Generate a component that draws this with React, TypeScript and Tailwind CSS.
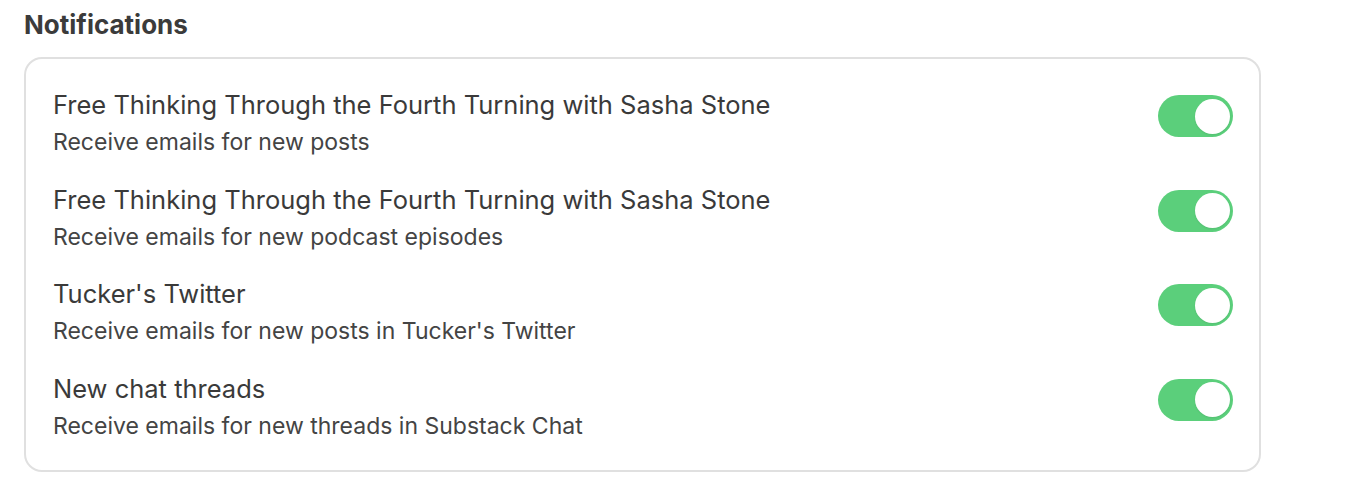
import { useState } from "react";

type Item = { title: string; subtitle: string };

const items: Item[] = [
  { title: "Free Thinking Through the Fourth Turning with Sasha Stone", subtitle: "Receive emails for new posts" },
  { title: "Free Thinking Through the Fourth Turning with Sasha Stone", subtitle: "Receive emails for new podcast episodes" },
  { title: "Tucker's Twitter", subtitle: "Receive emails for new posts in Tucker's Twitter" },
  { title: "New chat threads", subtitle: "Receive emails for new threads in Substack Chat" },
];

function Toggle({ on, onChange }: { on: boolean; onChange: () => void }) {
  return (
    <button
      type="button"
      onClick={onChange}
      className={`mt-[26px] flex h-[42px] w-[75px] shrink-0 items-center rounded-full px-[3.5px] ${
        on ? "justify-end bg-[#5bcf7b]" : "justify-start bg-[#e5e5e5]"
      }`}
    >
      <span className="size-[35px] rounded-full bg-white shadow-[0_1px_2px_rgba(0,0,0,0.08)]" />
    </button>
  );
}

export default function App() {
  const [state, setState] = useState(items.map(() => true));

  return (
    <div className="min-h-screen bg-white pl-[24px] pt-[9px] font-['Inter',sans-serif] text-[#363737]">
      <h2 className="text-[26px] font-bold leading-[32px] text-[#3b3b3b]">Notifications</h2>
      <div className="mt-[16px] w-[1237px] rounded-[18px] border-2 border-[#e0e0e0] pb-[23px] pl-[27px] pr-[26px] pt-[10px]">
        {items.map((it, i) => (
          <div key={i} className="flex h-[94.5px] items-start justify-between">
            <div className="mt-[18px] flex flex-col">
              <span className="text-[25.5px] leading-[36px] text-[#3a3a3a]">{it.title}</span>
              <span className="text-[23px] leading-[38px] text-[#444444]">{it.subtitle}</span>
            </div>
            <Toggle on={state[i]} onChange={() => setState(state.map((v, j) => (j === i ? !v : v)))} />
          </div>
        ))}
      </div>
    </div>
  );
}
